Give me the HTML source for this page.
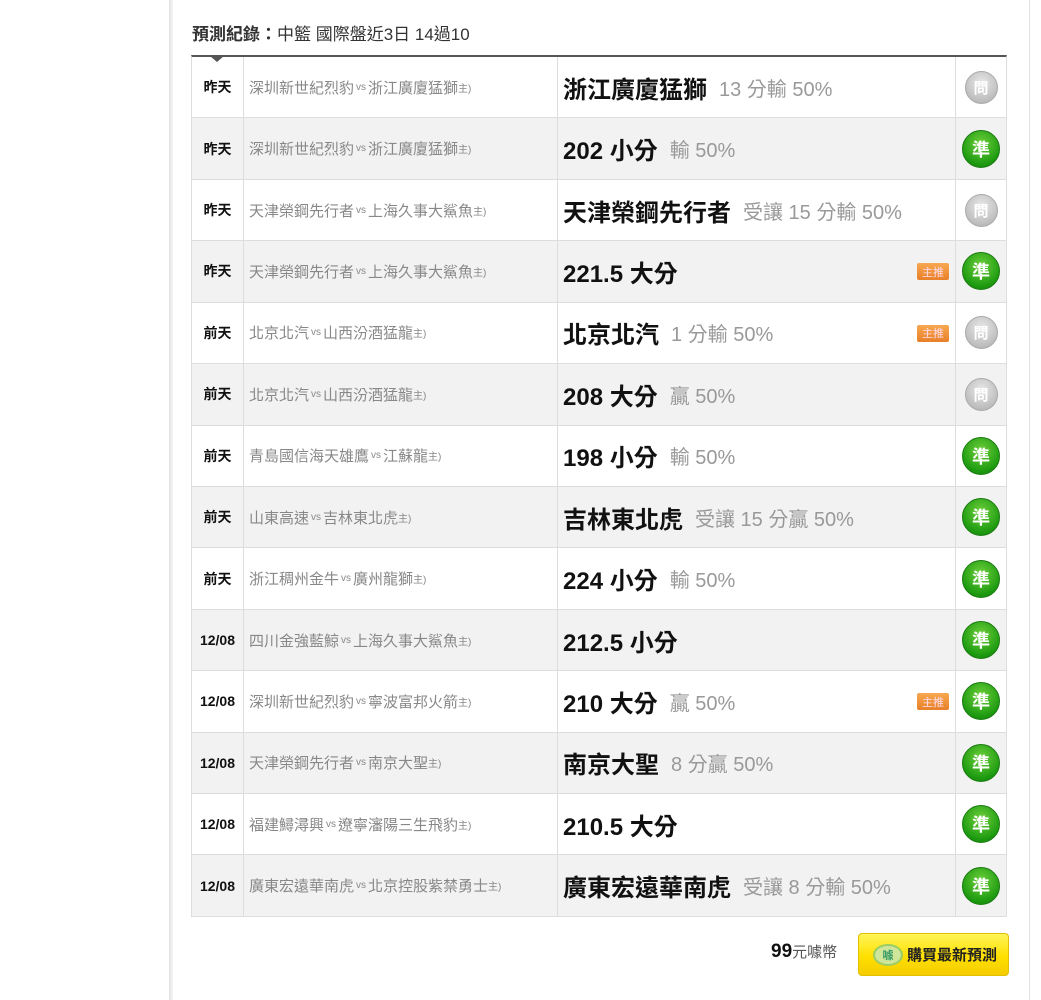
<!DOCTYPE html>
<html><head><meta charset="utf-8"><style>
*{margin:0;padding:0;box-sizing:border-box}
body{width:1041px;height:1000px;background:#fff;font-family:"Liberation Sans","Noto Sans CJK TC",sans-serif;position:relative;overflow:hidden}
.lb{position:absolute;left:169px;top:0;width:4px;height:1000px;background:linear-gradient(90deg,#e2e2e2,#f5f5f5)}
.rb{position:absolute;left:1029px;top:0;width:1px;height:1000px;background:#e2e2e2}
.title{position:absolute;left:192px;top:20px;font-size:17px;color:#333}
.title b{font-weight:bold}
.tbl{position:absolute;left:191px;top:55px;width:816px;border-top:2px solid #555;border-left:1px solid #ddd;border-right:1px solid #ddd}
.arrow{position:absolute;left:210px;top:56px;width:0;height:0;border-left:7px solid transparent;border-right:7px solid transparent;border-top:6px solid #555}
.row{display:flex;height:61.43px;border-bottom:1px solid #ddd}
.row:nth-child(even){background:#f2f2f2}
.c1{width:52px;border-right:1px solid #ddd;display:flex;align-items:center;justify-content:center;font-size:14px;font-weight:bold;color:#111}
.c2{width:314px;border-right:1px solid #ddd;display:flex;align-items:center;padding-left:5px;font-size:15px;color:#888;white-space:nowrap}
.c2 small{font-size:10px;margin:0 2px}
.c2 small.z{margin:0}
.c3{width:398px;border-right:1px solid #ddd;display:flex;align-items:center;padding-left:5px;position:relative}
.c3 b{font-size:24px;color:#111}
.c3 span{font-size:20px;color:#999;margin-left:12px}
.c4{flex:1;display:flex;align-items:center;justify-content:center}
.ok{width:38px;height:38px;border-radius:50%;background:radial-gradient(circle at 50% 35%,#6ed03c,#1d9a10 70%,#13780a);color:#fff;font-size:18px;font-weight:bold;display:flex;align-items:center;justify-content:center;border:1px solid #1a7a10}
.no{width:33px;height:33px;border-radius:50%;background:radial-gradient(circle at 50% 35%,#e8e8e8,#bbb 75%,#999);color:#fff;font-size:15px;font-weight:bold;display:flex;align-items:center;justify-content:center;border:1px solid #aaa}
.tag{position:absolute;right:6px;top:50%;margin-top:-8px;width:32px;height:17px;background:linear-gradient(#f8a850,#e8802a);color:#fde;font-size:11px;display:flex;align-items:center;justify-content:center;border-radius:2px}
.price{position:absolute;left:771px;top:941px;font-size:19px;font-weight:bold;color:#111}
.price span{font-size:15px;font-weight:normal;color:#555}
.btn{position:absolute;left:858px;top:933px;width:151px;height:43px;border:1px solid #e0c000;border-radius:4px;background:linear-gradient(#fff45a,#ffe000 55%,#f5cc00);display:flex;align-items:center;padding-left:14px;font-size:15px;font-weight:bold;color:#222}
.btn i{width:30px;height:22px;border-radius:50%;background:#cfe59a;border:2px solid #9c6;margin-right:4px;font-style:normal;font-size:11px;color:#396;display:flex;align-items:center;justify-content:center}
</style></head><body>
<div class="lb"></div><div class="rb"></div>
<div class="title"><b>預測紀錄：</b>中籃 國際盤近3日 14過10</div>
<div class="tbl">
<div class="row"><div class="c1">昨天</div><div class="c2">深圳新世紀烈豹<small>vs</small>浙江廣廈猛獅<small class="z">主)</small></div><div class="c3"><b>浙江廣廈猛獅</b><span>13 分輸 50%</span></div><div class="c4"><div class="no">問</div></div></div>
<div class="row"><div class="c1">昨天</div><div class="c2">深圳新世紀烈豹<small>vs</small>浙江廣廈猛獅<small class="z">主)</small></div><div class="c3"><b>202 小分</b><span>輸 50%</span></div><div class="c4"><div class="ok">準</div></div></div>
<div class="row"><div class="c1">昨天</div><div class="c2">天津榮鋼先行者<small>vs</small>上海久事大鯊魚<small class="z">主)</small></div><div class="c3"><b>天津榮鋼先行者</b><span>受讓 15 分輸 50%</span></div><div class="c4"><div class="no">問</div></div></div>
<div class="row"><div class="c1">昨天</div><div class="c2">天津榮鋼先行者<small>vs</small>上海久事大鯊魚<small class="z">主)</small></div><div class="c3"><b>221.5 大分</b><div class="tag">主推</div></div><div class="c4"><div class="ok">準</div></div></div>
<div class="row"><div class="c1">前天</div><div class="c2">北京北汽<small>vs</small>山西汾酒猛龍<small class="z">主)</small></div><div class="c3"><b>北京北汽</b><span>1 分輸 50%</span><div class="tag">主推</div></div><div class="c4"><div class="no">問</div></div></div>
<div class="row"><div class="c1">前天</div><div class="c2">北京北汽<small>vs</small>山西汾酒猛龍<small class="z">主)</small></div><div class="c3"><b>208 大分</b><span>贏 50%</span></div><div class="c4"><div class="no">問</div></div></div>
<div class="row"><div class="c1">前天</div><div class="c2">青島國信海天雄鷹<small>vs</small>江蘇龍<small class="z">主)</small></div><div class="c3"><b>198 小分</b><span>輸 50%</span></div><div class="c4"><div class="ok">準</div></div></div>
<div class="row"><div class="c1">前天</div><div class="c2">山東高速<small>vs</small>吉林東北虎<small class="z">主)</small></div><div class="c3"><b>吉林東北虎</b><span>受讓 15 分贏 50%</span></div><div class="c4"><div class="ok">準</div></div></div>
<div class="row"><div class="c1">前天</div><div class="c2">浙江稠州金牛<small>vs</small>廣州龍獅<small class="z">主)</small></div><div class="c3"><b>224 小分</b><span>輸 50%</span></div><div class="c4"><div class="ok">準</div></div></div>
<div class="row"><div class="c1">12/08</div><div class="c2">四川金強藍鯨<small>vs</small>上海久事大鯊魚<small class="z">主)</small></div><div class="c3"><b>212.5 小分</b></div><div class="c4"><div class="ok">準</div></div></div>
<div class="row"><div class="c1">12/08</div><div class="c2">深圳新世紀烈豹<small>vs</small>寧波富邦火箭<small class="z">主)</small></div><div class="c3"><b>210 大分</b><span>贏 50%</span><div class="tag">主推</div></div><div class="c4"><div class="ok">準</div></div></div>
<div class="row"><div class="c1">12/08</div><div class="c2">天津榮鋼先行者<small>vs</small>南京大聖<small class="z">主)</small></div><div class="c3"><b>南京大聖</b><span>8 分贏 50%</span></div><div class="c4"><div class="ok">準</div></div></div>
<div class="row"><div class="c1">12/08</div><div class="c2">福建鱘潯興<small>vs</small>遼寧瀋陽三生飛豹<small class="z">主)</small></div><div class="c3"><b>210.5 大分</b></div><div class="c4"><div class="ok">準</div></div></div>
<div class="row"><div class="c1">12/08</div><div class="c2">廣東宏遠華南虎<small>vs</small>北京控股紫禁勇士<small class="z">主)</small></div><div class="c3"><b>廣東宏遠華南虎</b><span>受讓 8 分輸 50%</span></div><div class="c4"><div class="ok">準</div></div></div>
</div>
<div class="arrow"></div>
<div class="price">99<span>元噱幣</span></div>
<div class="btn"><i>噱</i>購買最新預測</div>
</body></html>
